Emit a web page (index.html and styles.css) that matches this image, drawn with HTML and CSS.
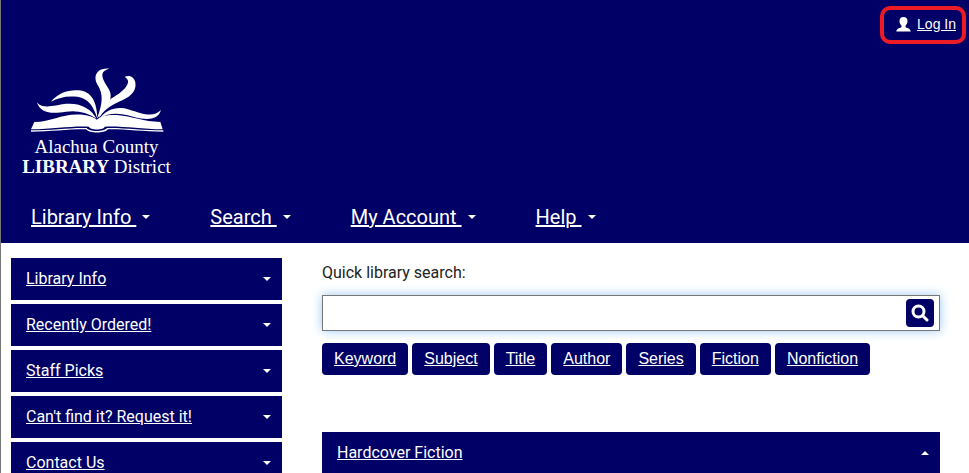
FILE: index.html
```
<!DOCTYPE html>
<html lang="en">

<head>
    <meta charset="UTF-8" />
    <meta name="viewport" content="width=device-width, initial-scale=1.0" />
    <title>Alachua County Library District</title>
    <link rel="stylesheet" href="styles.css">
</head>

<body>
    <header class="site-header">
        <div class="top-bar">
            <a class="login" href="#">
                <svg class="user-icon" viewBox="0 0 15 15" aria-hidden="true">
                    <path d="M7.500 0C4.600 0 3.300 1.800 3.500 4.500C3.600 6.300 4.500 7.700 5.500 8.700V9.800C5 11.300 .5 11 .3 14.500H14.700C14.500 11 10 11.300 9.500 9.800V8.700C10.500 7.700 11.400 6.300 11.500 4.500C11.700 1.800 10.400 0 7.500 0Z" />
                </svg>
                <span class="login-text">Log In</span>
            </a>
        </div>

        <a class="logo" href="#">
            <svg class="logo-book" viewBox="88 38 402 196" aria-hidden="true">
                <path d="M100 201C150 200 180 178 228 178C262 178 280 186 288 194C300 184 320 178 350 180C395 184 430 200 480 201L487 223C420 222 360 212 312 215C310 226 268 226 265 215C215 212 160 222 90 223Z" />
                <path d="M90 226C150 226 215 217 258 219C264 231 312 231 319 219C360 217 430 226 489 226V230C430 230 370 222 322 223C312 236 266 236 256 223C210 222 150 230 90 230Z" />
                <path d="M108 142C128 164 160 150 195 146C240 142 272 162 287 190C258 172 228 165 195 170C148 178 118 172 108 142Z" />
                <path d="M150 140C172 112 205 102 240 106C278 112 289 150 290 190C278 154 264 130 230 125C198 121 174 127 150 140Z" />
                <path d="M326 40C287 36 274 66 293 92C308 118 306 146 289 190C318 160 340 132 326 104C312 80 287 50 326 40Z" />
                <path d="M374 64C388 58 403 66 405 84C408 112 384 128 355 140C325 154 308 168 295 190C300 158 318 138 342 124C372 106 396 80 374 66Z" />
                <path d="M298 190C315 164 350 152 385 163C425 175 457 190 482 165C472 200 430 194 395 184C355 173 325 172 298 190Z" />
            </svg>
            <span class="logo-line">Alachua County</span>
            <span class="logo-line"><b>LIBRARY</b> District</span>
        </a>

        <nav class="main-nav">
            <a href="#"><span class="nav-label">Library Info </span><i class="caret"></i></a>
            <a href="#"><span class="nav-label">Search </span><i class="caret"></i></a>
            <a href="#"><span class="nav-label">My Account </span><i class="caret"></i></a>
            <a href="#"><span class="nav-label">Help </span><i class="caret"></i></a>
        </nav>
    </header>

    <div class="container">
        <aside class="sidebar">
            <a class="panel" href="#"><span class="panel-label">Library Info</span><i class="caret"></i></a>
            <a class="panel" href="#"><span class="panel-label">Recently Ordered!</span><i class="caret"></i></a>
            <a class="panel" href="#"><span class="panel-label">Staff Picks</span><i class="caret"></i></a>
            <a class="panel" href="#"><span class="panel-label">Can't find it? Request it!</span><i class="caret"></i></a>
            <a class="panel" href="#"><span class="panel-label">Contact Us</span><i class="caret"></i></a>
        </aside>

        <main class="content">
            <form class="search">
                <label for="quickSearch">Quick library search:</label>
                <div class="search-box">
                    <input type="text" id="quickSearch">
                    <button type="submit" aria-label="Search">
                        <svg viewBox="0 0 18 18" aria-hidden="true">
                            <circle cx="7.500" cy="7.500" r="5.500" />
                            <path d="M11.500 11.500L16 16" />
                        </svg>
                    </button>
                </div>
            </form>

            <div class="search-types">
                <a href="#">Keyword</a>
                <a href="#">Subject</a>
                <a href="#">Title</a>
                <a href="#">Author</a>
                <a href="#">Series</a>
                <a href="#">Fiction</a>
                <a href="#">Nonfiction</a>
            </div>

            <a class="panel" href="#"><span class="panel-label">Hardcover Fiction</span><i class="caret caret-up"></i></a>
        </main>
    </div>
</body>

</html>
```

FILE: styles.css
```
* {
    box-sizing: border-box;
}

body {
    font-family: Roboto, sans-serif;
    font-size: 16px;
    line-height: 22px;
    margin: 0;
    background: #fff;
    color: #222;
    border-left: 1px solid #777;
}

a {
    color: #fff;
    text-decoration: none;
}

.site-header {
    background: #006;
    color: #fff;
    padding: 6px 3px 10px 18px;
}

.top-bar {
    display: flex;
    justify-content: flex-end;
}

.login {
    display: flex;
    align-items: center;
    gap: 6px;
    height: 38px;
    padding: 0 6px 2px 12px;
    border: 4px solid #ed1c24;
    border-radius: 10px;
    font-family: "Liberation Sans", sans-serif;
    font-size: 14px;
}

.login-text,
.nav-label,
.panel-label,
.search-types a {
    text-decoration: underline;
}

.user-icon {
    width: 15px;
    height: 15px;
    fill: #fff;
}

.logo {
    display: inline-flex;
    flex-direction: column;
    align-items: center;
    min-width: 155px;
    margin-top: 24px;
    font-family: "Liberation Serif", serif;
    font-size: 19px;
    line-height: 20px;
}

.logo-book {
    width: 134px;
    height: 65px;
    margin-bottom: 4px;
    fill: #fff;
}

.main-nav {
    display: flex;
    flex-wrap: wrap;
    column-gap: 60px;
    padding-left: 12px;
    margin-top: 24px;
    font-size: 20px;
    line-height: 32px;
}

.main-nav a {
    display: flex;
    align-items: center;
    gap: 6px;
}

.nav-label {
    white-space: pre;
}

.caret {
    border: 4px solid transparent;
    border-top-color: #fff;
    border-bottom: 0;
}

.caret-up {
    border-top: 0;
    border-bottom: 4px solid #fff;
}

.container {
    display: flex;
    gap: 40px;
    padding: 15px 29px 0 10px;
}

.sidebar {
    display: flex;
    flex-direction: column;
    flex: 0 0 271px;
    gap: 4px;
}

.panel {
    display: flex;
    align-items: center;
    justify-content: space-between;
    padding: 10px 11px 10px 15px;
    background: #006;
}

.content {
    flex: 1;
}

.search label {
    display: block;
    margin: 4px 0 11px;
}

.search-box {
    display: flex;
    align-items: center;
    height: 36px;
    padding-right: 5px;
    border: 1px solid #777;
    box-shadow: 0 0 10px #9ccaf0;
}

.search-box input {
    flex: 1;
    height: 34px;
    padding: 0 10px;
    border: 0;
    outline: 0;
    font: inherit;
}

.search-box button {
    display: flex;
    align-items: center;
    justify-content: center;
    width: 28px;
    height: 28px;
    padding: 0;
    border: 0;
    border-radius: 4px;
    background: #006;
}

.search-box svg {
    width: 18px;
    height: 18px;
    fill: none;
    stroke: #fff;
    stroke-width: 3;
    stroke-linecap: round;
}

.search-types {
    display: flex;
    flex-wrap: wrap;
    gap: 4px;
    margin: 12px 0 57px;
    font-family: "Liberation Sans", sans-serif;
}

.search-types a {
    padding: 5px 12px;
    border-radius: 4px;
    background: #006;
}
```
